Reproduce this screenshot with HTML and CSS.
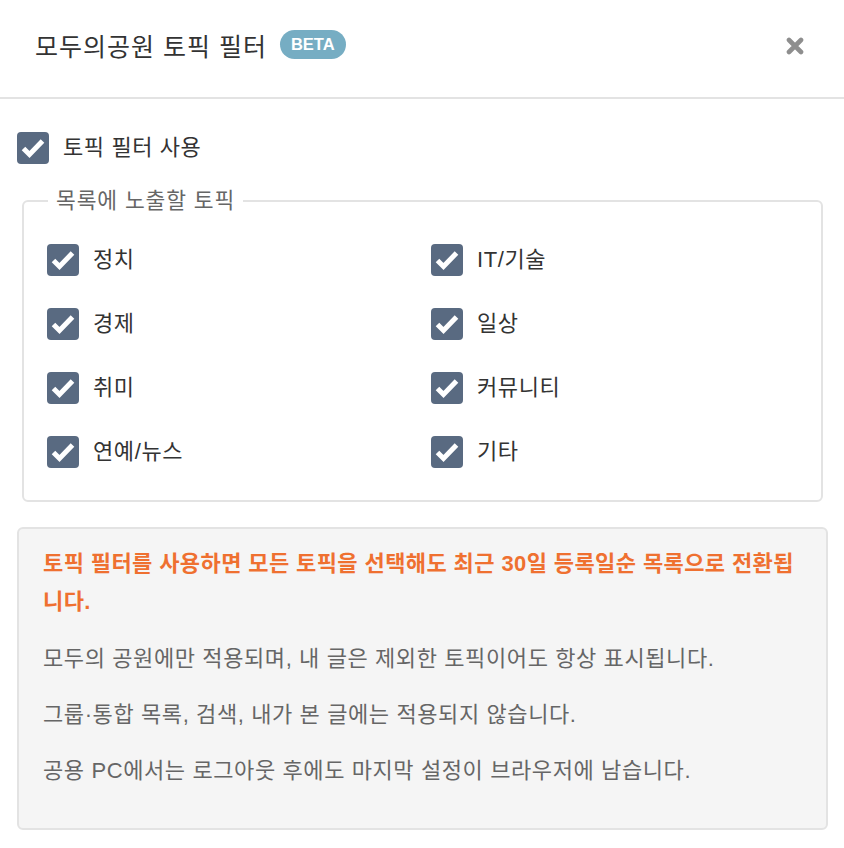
FILE: index.html
```html
<!DOCTYPE html>
<html lang="ko">
<head>
    <meta charset="UTF-8">
    <meta name="viewport" content="width=device-width, initial-scale=1.0">
    <title>모두의공원 토픽 필터</title>
    <link rel="stylesheet" href="styles.css">
</head>
<body>
    <div class="modal-header">
        <h1 class="modal-title">모두의공원 토픽 필터 <span class="badge">BETA</span></h1>
        <button type="button" class="close-btn" aria-label="닫기">
            <svg width="18" height="18" viewBox="0 0 18 18">
                <path d="M3 3 L15 15 M15 3 L3 15" stroke="#8e8e8e" stroke-width="4.6" stroke-linecap="round"/>
            </svg>
        </button>
    </div>

    <div class="modal-body">
        <label class="check-row main-toggle">
            <span class="check-box"><svg width="32" height="32" viewBox="0 0 32 32"><path d="M6.5 16.5 L12.5 22.5 L25.5 9" fill="none" stroke="#fff" stroke-width="5"/></svg></span>
            토픽 필터 사용
        </label>

        <fieldset class="topic-set">
            <legend>목록에 노출할 토픽</legend>
            <div class="topic-grid" id="topic-grid">
                <!-- topic checkboxes are filled in below -->
            </div>
        </fieldset>

        <div class="notice">
            <p class="notice-main">토픽 필터를 사용하면 모든 토픽을 선택해도 최근 30일 등록일순 목록으로 전환됩니다.</p>
            <p>모두의 공원에만 적용되며, 내 글은 제외한 토픽이어도 항상 표시됩니다.</p>
            <p>그룹·통합 목록, 검색, 내가 본 글에는 적용되지 않습니다.</p>
            <p>공용 PC에서는 로그아웃 후에도 마지막 설정이 브라우저에 남습니다.</p>
        </div>
    </div>

    <script>
        // Topics in grid order (left column, right column)
        const topics = ['정치', 'IT/기술', '경제', '일상', '취미', '커뮤니티', '연예/뉴스', '기타'];
        const checkSvg = '<svg width="32" height="32" viewBox="0 0 32 32"><path d="M6.5 16.5 L12.5 22.5 L25.5 9" fill="none" stroke="#fff" stroke-width="5"/></svg>';

        const grid = document.getElementById('topic-grid');
        topics.forEach(function(name) {
            const row = document.createElement('label');
            row.className = 'check-row';
            row.innerHTML = '<span class="check-box">' + checkSvg + '</span>' + name;
            grid.appendChild(row);
        });
    </script>
</body>
</html>
```

FILE: styles.css
```css
body {
    font-family: "Liberation Sans", "Noto Sans CJK KR", sans-serif;
    margin: 0;
    color: #333;
    background-color: #fff;
}
.modal-header {
    display: flex;
    align-items: center;
    justify-content: space-between;
    height: 99px;
    padding: 0 40px 0 35px;
    border-bottom: 2px solid #e3e3e3;
    box-sizing: border-box;
}
.modal-title {
    margin: 0;
    font-size: 25px;
    letter-spacing: 1px;
    font-weight: normal;
    display: flex;
    align-items: center;
    gap: 13px;
    margin-top: -8px;
}
.badge {
    background-color: #76adc3;
    color: #fff;
    font-family: "Liberation Sans", sans-serif;
    font-weight: bold;
    font-size: 16.5px;
    letter-spacing: 0;
    line-height: 29px;
    padding: 0 11px;
    border-radius: 15px;
}
.close-btn {
    background: none;
    border: none;
    padding: 0;
    cursor: pointer;
    display: flex;
    margin-top: -6px;
}
.modal-body {
    padding: 33px 16px 18px 17px;
}
.check-row {
    display: flex;
    align-items: center;
    gap: 14px;
    font-size: 22px;
    letter-spacing: 0.6px;
    line-height: 32px;
    cursor: pointer;
}
.check-box {
    width: 32px;
    height: 32px;
    border-radius: 4px;
    background-color: #596a81;
    display: flex;
    flex-shrink: 0;
}
.topic-set {
    margin: 25px 5px 0 5px;
    padding: 31px 20px 32px 23px;
    border: 2px solid #e3e3e3;
    border-radius: 6px;
}
.topic-set legend {
    font-size: 21.5px;
    letter-spacing: 0.9px;
    color: #666;
    padding: 0 8px;
    margin-left: 1px;
    line-height: 24px;
}
.topic-grid {
    display: grid;
    grid-template-columns: 384px 1fr;
    row-gap: 32px;
}
.notice {
    margin-top: 25px;
    background-color: #f5f5f5;
    border: 2px solid #e3e3e3;
    border-radius: 6px;
    padding: 16px 24px 42px 24px;
}
.notice p {
    margin: 26px 0 0 0;
    font-size: 22px;
    letter-spacing: 0.6px;
    line-height: 30px;
    color: #666;
}
.notice .notice-main {
    margin: 0 0 -3px 0;
    color: #ef7030;
    font-weight: 700;
    letter-spacing: 0.4px;
    line-height: 38px;
}
```
